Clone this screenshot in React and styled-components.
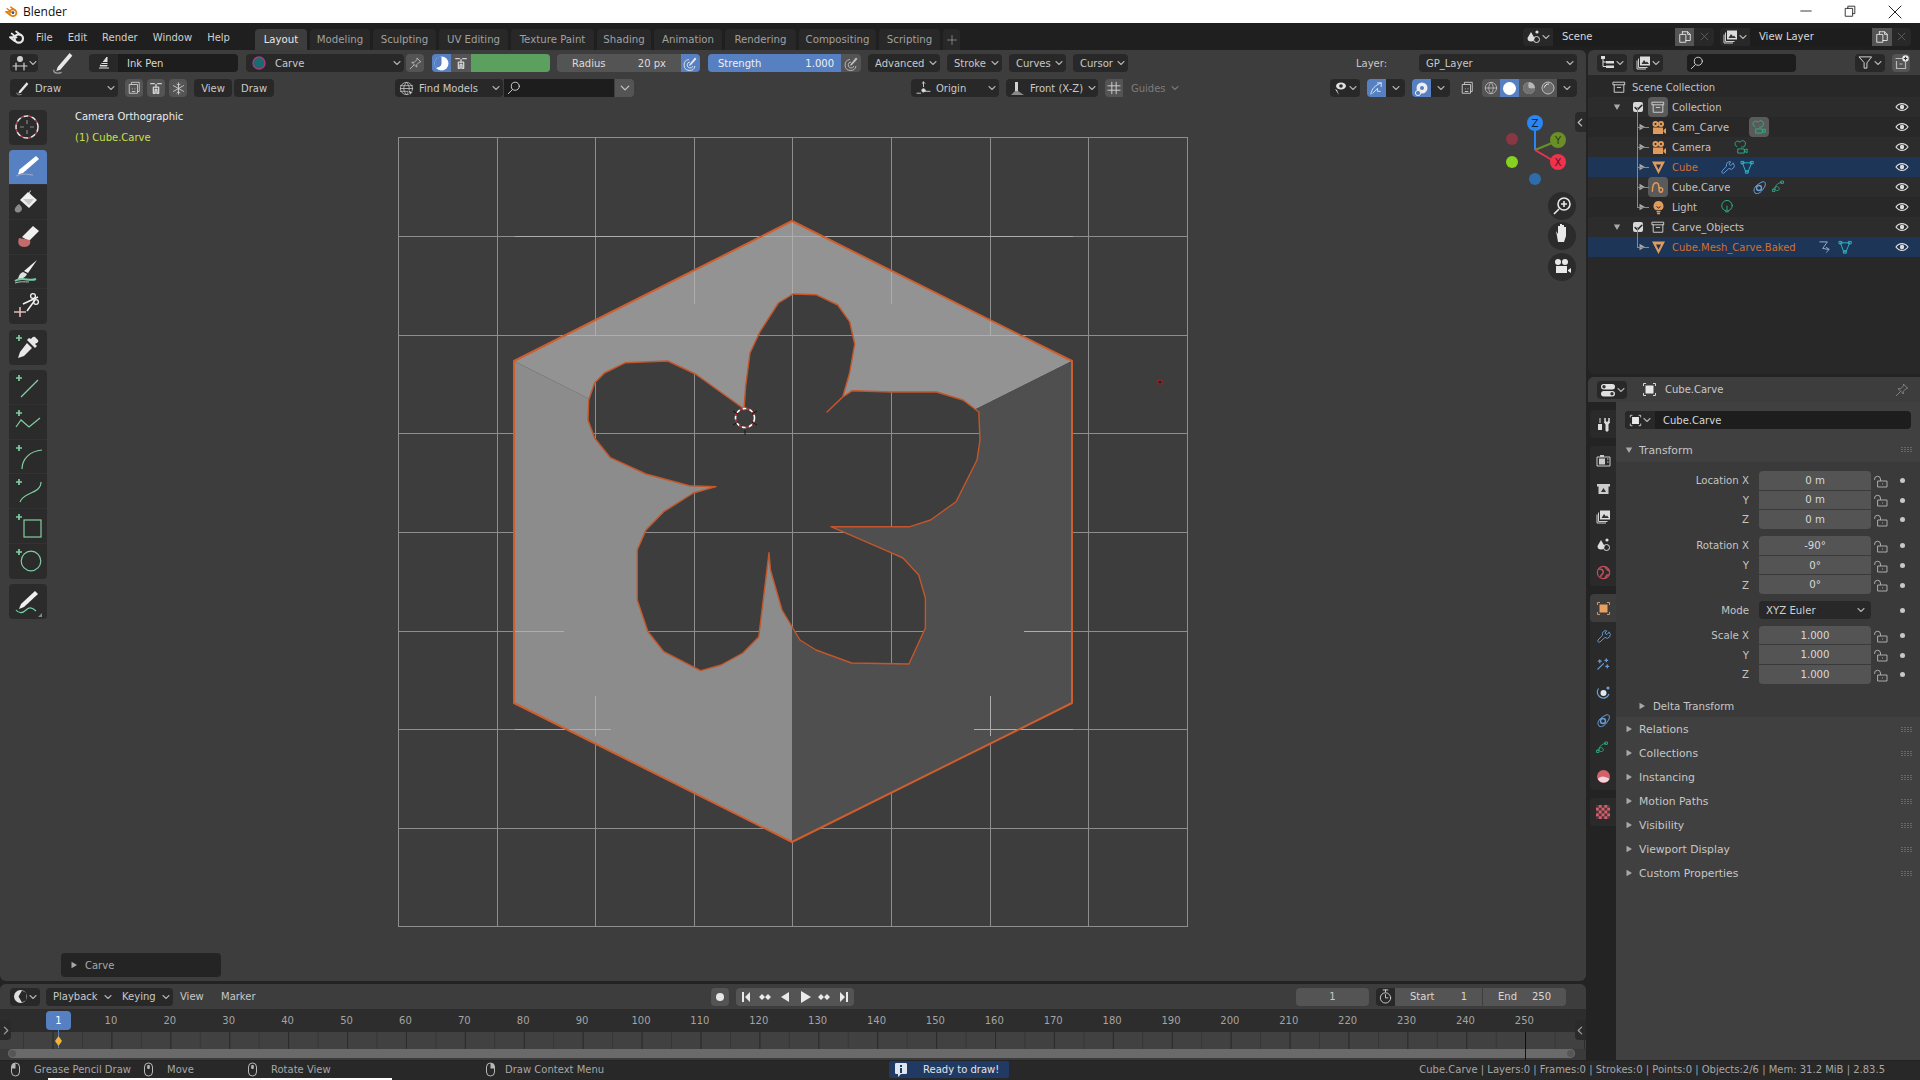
import React from 'react';
import styled, { createGlobalStyle } from 'styled-components';

const GlobalStyle = createGlobalStyle`
  html, body { margin: 0; padding: 0; background: #232323; }
  body { font-family: "DejaVu Sans", sans-serif; font-size: 10px; color: #c6c6c6; overflow: hidden; }
  * { box-sizing: border-box; }
  svg { display: block; flex: none; }
`;

const tones = {
  dark: '#282828',
  field: '#1d1d1d',
  gray: '#545454',
  blue: '#5680c2',
  green: '#5ca05f',
  none: 'transparent',
};

const joins = { l: '4px 0 0 4px', r: '0 4px 4px 0', m: '0', all: '4px' };

/* ---------- shell ---------- */

const Page = styled.div`
  width: 1920px;
  height: 1080px;
  display: flex;
  flex-direction: column;
  overflow: hidden;
  background: #232323;
`;

const TitleBar = styled.div`
  height: 23px;
  flex: none;
  background: #fff;
  color: #111;
  display: flex;
  align-items: center;
  padding-left: 5px;
  font-family: "Open Sans", sans-serif;
  font-size: 12px;
  gap: 5px;
`;

const WinButtons = styled.div`
  margin-left: auto;
  display: flex;
  padding-right: 17px;
  gap: 30px;
`;

const TopBar = styled.div`
  height: 27px;
  flex: none;
  background: #1f1f1f;
  display: flex;
  align-items: flex-end;
  padding-left: 9px;
`;

const MenuItems = styled.div`
  display: flex;
  align-items: center;
  height: 27px;
  width: 246px;
  gap: 15px;
  padding-top: 1px;
  color: #d0d0d0;
`;

const MenuLogo = styled.span`
  margin-right: -4px;
`;

const WorkspaceTab = styled.div`
  height: 21px;
  width: ${p => p.$w}px;
  margin-right: 3px;
  display: flex;
  align-items: center;
  justify-content: center;
  border-radius: 4px 4px 0 0;
  font-size: 10.2px;
  background: ${p => (p.$active ? '#3d3d3d' : '#282828')};
  color: ${p => (p.$active ? '#e6e6e6' : '#a0a0a0')};
`;

const TopRight = styled.div`
  margin-left: auto;
  height: 27px;
  display: flex;
  align-items: center;
  padding-right: 9px;
`;

const Body = styled.div`
  flex: 1;
  display: flex;
  gap: 2px;
  min-height: 0;
`;

const LeftColumn = styled.div`
  width: 1586px;
  display: flex;
  flex-direction: column;
  gap: 3px;
`;

const RightColumn = styled.div`
  flex: 1;
  display: flex;
  flex-direction: column;
  gap: 3px;
`;

/* ---------- widgets ---------- */

const Widget = styled.div`
  flex: none;
  height: 18px;
  width: ${p => p.$w}px;
  margin-left: ${p => p.$ml || 0}px;
  padding: 0 ${p => (p.$padR === undefined ? (p.$pad === undefined ? 5 : p.$pad) : p.$padR)}px 0 ${p => (p.$pad === undefined ? 5 : p.$pad)}px;
  display: flex;
  align-items: center;
  justify-content: ${p => (p.$center ? 'center' : 'flex-start')};
  gap: ${p => p.$gap || 0}px;
  background: ${p => tones[p.$tone || 'dark']};
  border-radius: ${p => joins[p.$join || 'all']};
  color: ${p => p.$color || '#c8c8c8'};
  white-space: nowrap;
  overflow: hidden;
`;

const PenSlot = styled.span`
  flex: none;
  width: 20px;
  height: 18px;
  margin-left: 15px;
  margin-right: -1px;
  display: flex;
  align-items: center;
  justify-content: center;
`;

const Grow = styled.span`
  flex: 1;
`;

const Plain = styled.span`
  flex: none;
  width: ${p => p.$w}px;
  margin-left: ${p => p.$ml || 0}px;
  color: #c8c8c8;
`;

const Seg = styled.div`
  flex: none;
  height: 100%;
  width: ${p => p.$w}px;
  display: flex;
  align-items: center;
  justify-content: center;
  background: ${p => tones[p.$tone || 'none']};
`;

/* ---------- viewport ---------- */

const Viewport = styled.div`
  position: relative;
  height: 931px;
  flex: none;
  background: #3d3d3d;
  border-radius: 0 6px 6px 6px;
  overflow: hidden;
`;

const Canvas = styled.svg`
  position: absolute;
  left: 0;
  top: 0;
`;

const HeaderRow = styled.div`
  position: relative;
  display: flex;
  align-items: center;
  height: 18px;
  padding-left: 10px;
  margin-top: ${p => p.$mt}px;
`;

const ViewBody = styled.div`
  position: relative;
  display: flex;
  padding: 13px 0 0 9px;
`;

const ToolColumn = styled.div`
  width: 38px;
  display: flex;
  flex-direction: column;
  gap: 5.5px;
`;

const ToolGroup = styled.div`
  background: #2b2b2b;
  border-radius: 4px;
  overflow: hidden;
`;

const Tool = styled.div`
  height: 34.8px;
  display: flex;
  align-items: center;
  justify-content: center;
  background: ${p => (p.$active ? '#5680c2' : 'transparent')};
  border-bottom: 1px solid #323232;
  &:last-child { border-bottom: 0; }
`;

const ViewInfo = styled.div`
  margin: -3px 0 0 28px;
  line-height: 20.5px;
  color: #ececec;
`;

const ActiveName = styled.div`
  color: #cbe04a;
`;

const OpPanel = styled.div`
  position: absolute;
  left: 61px;
  bottom: 4px;
  width: 160px;
  height: 24px;
  background: #242424;
  border-radius: 4px;
  display: flex;
  align-items: center;
  gap: 7px;
  padding-left: 9px;
  color: #a8a8a8;
`;

const EdgeArrow = styled.div`
  position: absolute;
  ${p => p.$side}: 0;
  top: ${p => p.$top}px;
  width: 11px;
  height: 20px;
  background: #2a2a2a;
  border-radius: ${p => (p.$side === 'right' ? '4px 0 0 4px' : '0 4px 4px 0')};
  display: flex;
  align-items: center;
  justify-content: center;
`;

const NavGizmo = styled.svg`
  position: absolute;
  right: 10px;
  top: 62px;
`;

/* ---------- timeline ---------- */

const Timeline = styled.div`
  position: relative;
  flex: 1;
  display: flex;
  flex-direction: column;
  border-radius: 6px 6px 0 0;
  overflow: hidden;
  background: #3a3a3a;
`;

const TimeHeader = styled.div`
  height: 25px;
  flex: none;
  display: flex;
  align-items: center;
  padding-left: 10px;
  background: #3d3d3d;
`;

const Scrub = styled.div`
  height: 23px;
  flex: none;
  background: #2d2d2d;
  display: flex;
  align-items: center;
  padding-left: 81.5px;
  color: #a4a4a4;
`;

const FrameNum = styled.span`
  flex: none;
  width: 58.9px;
  text-align: center;
`;

const FrameBadge = styled.div`
  position: absolute;
  left: 46px;
  top: 27px;
  width: 25px;
  height: 19px;
  border-radius: 4px;
  background: #5680c2;
  color: #fff;
  display: flex;
  align-items: center;
  justify-content: center;
`;

const Tracks = styled.div`
  height: 17px;
  flex: none;
  background-color: #414141;
  background-image:
    linear-gradient(90deg, #2b2b2b 1px, transparent 1px),
    linear-gradient(90deg, #363636 1px, transparent 1px);
  background-size: 58.92px 100%, 29.46px 100%;
  background-position: 52.5px 0, 52.5px 0;
`;

const Playhead = styled.svg`
  position: absolute;
  left: 50px;
  top: 46px;
`;

const EndLine = styled.div`
  position: absolute;
  left: 1525px;
  top: 48px;
  width: 1px;
  height: 28px;
  background: #111;
`;

const ScrollBar = styled.div`
  height: 9px;
  margin: 0 11px 0 8px;
  flex: none;
  position: relative;
  background: #6a6a6a;
  border-radius: 5px;
  display: flex;
  justify-content: space-between;
  align-items: center;
  padding: 0 1px;
`;

const ScrollEnd = styled.span`
  width: 7px;
  height: 7px;
  border-radius: 50%;
  background: #565656;
`;

/* ---------- outliner ---------- */

const Outliner = styled.div`
  height: 324px;
  flex: none;
  background: #282828;
  border-radius: 6px 0 0 6px;
  overflow: hidden;
`;

const PanelHeader = styled.div`
  height: 25px;
  flex: none;
  display: flex;
  align-items: center;
  background: #3d3d3d;
  padding-left: 9px;
`;

const OutRows = styled.div`
  padding-top: 2px;
`;

const OutRow = styled.div`
  height: 20px;
  position: relative;
  display: flex;
  align-items: center;
  padding-left: ${p => p.$indent}px;
  background: ${p => (p.$sel ? '#1d3557' : p.$alt ? '#2c2c2c' : 'transparent')};
`;

const Twist = styled.span`
  flex: none;
  width: 20px;
  display: flex;
`;

const Check = styled.span`
  flex: none;
  width: 10px;
  height: 10px;
  border-radius: 2px;
  background: #d8d8d8;
  margin-right: 5px;
  display: flex;
  align-items: center;
  justify-content: center;
`;

const Branch = styled.span`
  position: relative;
  flex: none;
  width: 11px;
  height: 20px;
  display: flex;
  align-items: center;
  padding-left: 1px;
  &::before {
    content: '';
    position: absolute;
    left: 0;
    top: -10px;
    height: ${p => (p.$last ? 20 : 30)}px;
    width: 1px;
    background: #8a8a8a;
  }
  &::after {
    content: '';
    position: absolute;
    left: 0;
    top: 10px;
    width: 12px;
    height: 1px;
    background: #8a8a8a;
  }
`;

const IconChip = styled.span`
  flex: none;
  width: 20px;
  height: 20px;
  margin-right: ${p => p.$mr || 0}px;
  border-radius: 4px;
  display: flex;
  align-items: center;
  justify-content: center;
  background: ${p => (p.$hi ? '#5a5a5a' : 'transparent')};
`;

const OutName = styled.span`
  flex: none;
  width: ${p => p.$w}px;
  color: ${p => p.$color || '#c2c2c2'};
`;

const OutExtras = styled.span`
  flex: none;
  display: flex;
  align-items: center;
`;

const EyeSlot = styled.span`
  position: absolute;
  right: 11px;
  top: 3px;
`;

/* ---------- properties ---------- */

const Properties = styled.div`
  flex: 1;
  display: flex;
  flex-direction: column;
  background: #3d3d3d;
  border-radius: 6px 0 0 0;
  overflow: hidden;
`;

const PropBody = styled.div`
  flex: 1;
  display: flex;
  min-height: 0;
`;

const TabColumn = styled.div`
  width: 28px;
  flex: none;
  background: #232323;
  padding: 8px 0 0 2px;
  display: flex;
  flex-direction: column;
  gap: 8px;
`;

const TabGroup = styled.div`
  background: #2a2a2a;
  border-radius: 4px 0 0 4px;
  overflow: hidden;
`;

const PropTab = styled.div`
  height: 28px;
  display: flex;
  align-items: center;
  justify-content: center;
  background: ${p => (p.$active ? '#3d3d3d' : 'transparent')};
  border-radius: 4px 0 0 4px;
`;

const PropMain = styled.div`
  flex: 1;
  background: #404040;
  padding-top: 9px;
`;

const NameRow = styled.div`
  margin: 0 9px;
  height: 18px;
  background: #1d1d1d;
  border-radius: 4px;
  display: flex;
  align-items: center;
  color: #d6d6d6;
`;

const NameIcon = styled.div`
  width: 30px;
  height: 18px;
  background: #282828;
  border-radius: 4px 0 0 4px;
  margin-right: 8px;
  display: flex;
  align-items: center;
  justify-content: center;
  gap: 1px;
`;

const PanelTitle = styled.div`
  height: ${p => p.$h || 24}px;
  margin-top: ${p => p.$mt || 0}px;
  display: flex;
  align-items: center;
  padding: 0 8px 0 9px;
  font-size: 10.8px;
  color: #c6c6c6;
  gap: 6px;
`;

const TransformBody = styled.div`
  background: #3a3a3a;
  height: 255px;
  padding-top: 9px;
`;

const PropGroup = styled.div`
  margin-bottom: 6.4px;
`;

const PropRow = styled.div`
  height: ${p => p.$h || 19.6}px;
  display: flex;
  align-items: center;
`;

const PropLabel = styled.span`
  width: 133px;
  text-align: right;
  flex: none;
  margin-right: 10px;
  font-size: 10.2px;
  color: #c4c4c4;
`;

const PropValue = styled.div`
  width: 112px;
  height: 100%;
  flex: none;
  background: #545454;
  border-bottom: 1px solid #3a3a3a;
  display: flex;
  align-items: center;
  justify-content: center;
  font-size: 10.2px;
  color: #d8d8d8;
  border-radius: ${p => (p.$first ? '4px 4px 0 0' : p.$last ? '0 0 4px 4px' : '0')};
`;

const ModeSelect = styled.div`
  width: 112px;
  height: 18px;
  flex: none;
  background: #282828;
  border-radius: 4px;
  padding: 0 6px 0 7px;
  display: flex;
  align-items: center;
  font-size: 10.2px;
  color: #d0d0d0;
`;

const LockSlot = styled.span`
  flex: none;
  width: 25px;
  margin-left: 2px;
  display: flex;
`;

const DotSlot = styled.span`
  flex: none;
  width: 5px;
  height: 5px;
  margin-left: 2px;
  border-radius: 50%;
  background: #c8c8c8;
`;

const DeltaRow = styled.div`
  display: flex;
  align-items: center;
  gap: 7px;
  padding-left: 22px;
  margin-top: 16px;
  font-size: 10.2px;
  color: #c6c6c6;
`;

const PanelText = styled.span`
  flex: 1;
  padding-top: ${p => p.$dy || 0}px;
`;

/* ---------- status bar ---------- */

const Gutter = styled.div`
  height: 1px;
  flex: none;
`;

const StatusBar = styled.div`
  height: 17px;
  flex: none;
  display: flex;
  align-items: center;
  padding: 0 35px 0 10px;
  color: #a6a6a6;
  background: #282828;
`;

const StatusItem = styled.div`
  flex: none;
  width: ${p => p.$w}px;
  display: flex;
  align-items: center;
  gap: ${p => p.$gap}px;
`;

const ReadyBadge = styled.div`
  flex: none;
  width: 120px;
  height: 17px;
  background: #203a63;
  border-radius: 2px;
  color: #e4e4e4;
  display: flex;
  align-items: center;
  gap: 15px;
  padding-left: 5px;
`;

const StatusRight = styled.div`
  margin-left: auto;
`;

const TaskSliver = styled.div`
  height: 2px;
  flex: none;
  background: #282828;
  padding-left: 48px;
  &::before {
    content: '';
    display: block;
    width: 344px;
    height: 2px;
    background: #fff;
  }
`;

/* ---------- icons ---------- */

const Ico = ({ s = 14, vb = 16, c = '#d8d8d8', sw = 1.2, d, fill = 'none', children }) => (
  <svg width={s} height={s} viewBox={`0 0 ${vb} ${vb}`} fill={fill} stroke={c} strokeWidth={sw} strokeLinecap="round" strokeLinejoin="round">
    {d && <path d={d} />}
    {children}
  </svg>
);

const Chev = ({ c = '#b0b0b0', s = 8 }) => <Ico s={s} vb={8} c={c} sw={1.1} d="M1 2.5 4 5.5 7 2.5" />;
const Tri = ({ c = '#a8a8a8', open }) => (
  <svg width="8" height="8" viewBox="0 0 8 8">
    <path d={open ? 'M0.8 1.5h6.4L4 7z' : 'M1.5 0.8v6.4L7 4z'} fill={c} />
  </svg>
);

const Logo = ({ c, dot, s = 16 }) => (
  <svg width={s} height={s} viewBox="0 0 16 16" fill="none">
    <circle cx="9.8" cy="9.5" r="4.2" stroke={c} strokeWidth="2.2" />
    <path d="M1 8.2h6L2.8 4.6M7.2 2.6 12 6.2M1.2 8.4 5.6 12" stroke={c} strokeWidth="1.9" strokeLinecap="round" />
    <circle cx="9.8" cy="9.5" r="1.7" fill={dot} />
  </svg>
);

const PenBig = ({ s = 18 }) => (
  <svg width={s} height={s} viewBox="0 0 18 18" fill="none">
    <path d="M14 1.5 16 3.5 7 14 4 15 5 12z" fill="#e8e8e8" />
    <path d="M2 14c0 3 3 3 6 2" stroke="#9a9a9a" strokeWidth="1" />
  </svg>
);

const ModeIcon = () => (
  <Ico s={16} c="#d0d0d0" d="M1 11h14M4 8v7M12 8v7">
    <circle cx="8" cy="4" r="2.4" fill="#d0d0d0" />
  </Ico>
);

const InkIcon = () => (
  <svg width="14" height="14" viewBox="0 0 14 14" fill="none">
    <path d="M2 12h10M10 1 3 10h7z" fill="#e0e0e0" stroke="#e0e0e0" />
    <path d="M5 6.5h6M4 8.5h7" stroke="#282828" />
  </svg>
);

const MatBall = () => (
  <svg width="14" height="14" viewBox="0 0 14 14">
    <circle cx="7" cy="7" r="6" fill="#1b6a6c" stroke="#a83a80" strokeWidth="1.4" />
  </svg>
);

const PinIcon = ({ c = '#c8c8c8', s = 13 }) => <Ico s={s} c={c} sw={1} d="M10 1.5 14.5 6 12.5 6.5 9.5 9.5 9.5 12.5 3.5 6.5 6.5 6.5 9.5 3.5ZM6 10 1.5 14.5" />;

const HalfBall = ({ s = 15 }) => (
  <svg width={s} height={s} viewBox="0 0 14 14">
    <circle cx="7" cy="7" r="6.5" fill="#fff" />
    <path d="M7 .5a6.5 6.5 0 0 0-5 10.6C5 10.5 7 9.5 7 7z" fill="#5680c2" />
  </svg>
);

const NodesIcon = () => (
  <Ico s={14} c="#d0d0d0" sw={1.6} d="M2 3h4M10 3h4M8 4v4M5 7h6v7H9v-4H7v4H5z" />
);

const BrushPen = ({ c = '#e8e8e8' }) => (
  <svg width="15" height="15" viewBox="0 0 15 15" fill="none">
    <path d="M12 1.5 13.5 3 8 9 6 10l.7-2z" fill={c} />
    <path d="M6 3.5a5.5 5.5 0 1 0 6 6.5M7 6a3 3 0 1 0 3 4" stroke={c} strokeWidth="0.9" />
  </svg>
);

const SearchIcon = ({ s = 14 }) => (
  <Ico s={s} c="#d0d0d0" sw={1.1} d="M6 10 1.5 14.5">
    <circle cx="9.5" cy="6" r="4.6" />
  </Ico>
);

const GlobeArrow = () => (
  <Ico s={15} c="#c0c0c0" sw={0.9} d="M1.5 8h13M8 1.5c-4 4-4 9 0 13M8 1.5c4 4 4 9 0 13M1.5 5h13M1.5 11h9">
    <circle cx="8" cy="8" r="6.5" />
    <path d="M10 10 15 12l-2 1-1 2z" fill="#e6e6e6" stroke="#3d3d3d" />
  </Ico>
);

const OriginIcon = () => (
  <Ico s={15} c="#cfcfcf" sw={1} d="M8 1v5M6.5 2.5 8 1l1.5 1.5M10 11h5M1 13h4">
    <circle cx="8" cy="10" r="1.8" fill="#e0e0e0" />
  </Ico>
);

const CubeView = () => (
  <svg width="15" height="15" viewBox="0 0 15 15" fill="none">
    <path d="M5 1h3v9H5z" fill="#d0d0d0" />
    <path d="M1 14 5 10h3l6 4z" fill="#8a8a8a" />
  </svg>
);

const GridIcon = ({ c = '#d0d0d0' }) => <Ico s={14} c={c} sw={1.1} d="M1 5.5h14M1 10.5h14M5.5 1.5v13M10.5 1.5v13" />;

const EyeOverlay = () => (
  <svg width="15" height="15" viewBox="0 0 15 15" fill="none">
    <ellipse cx="8" cy="5" rx="5" ry="3.5" fill="#e0e0e0" />
    <circle cx="8" cy="5" r="1.8" fill="#282828" />
    <path d="M2 8 6 14 4 9z" fill="#e0e0e0" />
  </svg>
);

const SnapIcon = () => <Ico s={15} c="#e8e8e8" sw={1} d="M2 14C3 8 6 5 13 2M9 2h4v4M4 13 9 8M9 8v3h3" />;

const PropEdit = () => (
  <svg width="15" height="15" viewBox="0 0 15 15" fill="none">
    <circle cx="8" cy="7" r="5.5" fill="#eee" />
    <circle cx="8" cy="7" r="2" fill="#5680c2" />
    <circle cx="4" cy="12" r="2.6" stroke="#eee" fill="#5680c2" />
  </svg>
);

const XrayIcon = () => (
  <Ico s={14} c="#d0d0d0" sw={1} d="M3 4h9v10H3zM5 4V1.5h9V12h-2M6 9h.1M9 9h.1M6 12h3" />
);

const ShadeWire = () => (
  <Ico s={14} c="#c0c0c0" sw={0.9} d="M1.5 8h13M8 1.5c-3.5 4-3.5 9 0 13M8 1.5c3.5 4 3.5 9 0 13">
    <circle cx="8" cy="8" r="6.5" />
  </Ico>
);

const ShadeSolid = () => <svg width="15" height="15" viewBox="0 0 15 15"><circle cx="7.5" cy="7.5" r="6.5" fill="#fff" /></svg>;
const ShadeMat = () => (
  <svg width="14" height="14" viewBox="0 0 14 14">
    <circle cx="7" cy="7" r="6" fill="#b8b8b8" />
    <path d="M7 13a6 6 0 0 1 0-12c-1 3-1 4 0 6 2 .5 4 .5 6 0a6 6 0 0 1-6 6z" fill="#727272" />
  </svg>
);
const ShadeRender = () => (
  <svg width="14" height="14" viewBox="0 0 14 14" fill="none">
    <circle cx="7" cy="7" r="6" fill="#6a6a6a" stroke="#c0c0c0" />
    <path d="M3.5 6.5A4 4 0 0 1 8 3" stroke="#e8e8e8" />
  </svg>
);

const CopyIcon = () => <Ico s={14} c="#e0e0e0" sw={1.1} d="M5 2h6l3 3v7H9M5 2v3H2v9h7V5H5M11 2v3h3" />;
const CloseIcon = ({ c = '#6a6a6a' }) => <Ico s={11} c={c} sw={1.1} d="M3 3l10 10M13 3 3 13" />;

const SceneIcon = () => (
  <svg width="15" height="15" viewBox="0 0 15 15" fill="none">
    <path d="M5 3 8.5 9a3.5 3.5 0 1 1-7 0z" fill="#dcdcdc" />
    <circle cx="11" cy="3" r="1.6" fill="#dcdcdc" />
    <circle cx="10.5" cy="10.5" r="3" stroke="#dcdcdc" />
  </svg>
);

const LayerIcon = () => (
  <svg width="15" height="15" viewBox="0 0 15 15" fill="none">
    <path d="M4 1.5h10v9H4z" fill="#dcdcdc" />
    <path d="M5.5 9 8 5l2 2.5 1-1L13 9z" fill="#333" />
    <path d="M2.5 3.5v9h9M1 5.5V14h9" stroke="#cfcfcf" />
  </svg>
);

const OutlinerType = () => (
  <svg width="15" height="15" viewBox="0 0 15 15" fill="none">
    <path d="M1 1h4v3H1zM6 6h8v2.4H6zM6 10.5h8V13H6z" fill="#dcdcdc" />
    <path d="M3 4v7.5h3M3 7h3" stroke="#dcdcdc" />
  </svg>
);

const FilterIcon = () => <Ico s={15} c="#dcdcdc" sw={1} d="M1.5 2h13L9.5 8.5V14H6.5V8.5z" />;

const NewColl = () => (
  <svg width="15" height="15" viewBox="0 0 15 15" fill="none">
    <path d="M1.5 3.5h8M2.5 6v7.5h9V7M5.5 9h3" stroke="#b8b8b8" strokeWidth="1.2" />
    <circle cx="11.5" cy="3.5" r="3.2" fill="#e8e8e8" />
    <path d="M11.5 1.8v3.4M9.8 3.5h3.4" stroke="#333" />
  </svg>
);

const Collection = () => <Ico s={14} c="#d0d0d0" sw={1.1} d="M1.5 2.5h13v3h-13zM2.5 5.5V14h11V5.5M6 8.5h4" />;

const CamObj = () => (
  <svg width="15" height="15" viewBox="0 0 15 15">
    <circle cx="4.5" cy="4" r="3" fill="#e09a5c" />
    <circle cx="10" cy="4" r="3" fill="#e09a5c" />
    <circle cx="4.5" cy="4" r="1" fill="#282828" />
    <circle cx="10" cy="4" r="1" fill="#282828" />
    <path d="M2 7.5h10v6.5H2zM12.5 10 15 8v6l-2.5-2z" fill="#e09a5c" />
  </svg>
);

const CamData = () => (
  <Ico s={15} c="#2fae8a" sw={1} d="M4 13.5V9.5h7v4zM11 11l3-1.5v4L11 12M3 7a3 3 0 1 1 3.5-4.5A3 3 0 0 1 12 5c0 2-2 3-4 2.5" />
);

const MeshObj = () => (
  <svg width="15" height="15" viewBox="0 0 15 15">
    <path d="M1 1.5h13L7.5 14zM5 4.5l2.5 5 2.5-5z" fill="#e09a5c" fillRule="evenodd" />
  </svg>
);

const MeshData = () => (
  <Ico s={15} c="#2fb8c8" sw={1} d="M3 3h9.5L8.5 12.5H6.5zM1.5 1.5h2.6v2.6H1.5zM11.5 1.5h2.6v2.6h-2.6zM6.2 11.5h2.6v2.6H6.2z" />
);

const Wrench = ({ c = '#6a9ed8' }) => <Ico s={15} c={c} sw={1} d="M14 3.5 11.5 6 9.5 4.5 11.5 2A3.5 3.5 0 0 0 7 6.5L2 12a1.5 1.5 0 0 0 2 2l5.5-5A3.5 3.5 0 0 0 14 3.5z" />;

const GpObj = () => <Ico s={15} c="#e09a5c" sw={1.6} d="M1.5 12c0-6 2-9 4-9s3 3 3 6c0 3 1 4 2 4s2-1 2-2.5c0-2-2-3-4-1.5" />;
const ModBlue = () => (
  <svg width="15" height="15" viewBox="0 0 15 15" fill="none">
    <path d="M3 13C0 9 4 5 10 2c3-1 4 1 3 4-3 6-7 9-10 7z" stroke="#6a9ed8" />
    <circle cx="7" cy="8" r="2.5" stroke="#6a9ed8" strokeWidth="1.4" />
  </svg>
);
const GpData = () => <Ico s={14} c="#2fae8a" sw={1} d="M2 11c0-3 3-4 5-3s2 4-1 4-3-3-1-6 5-3 6-3M1 10.5h2.4v2.6H1zM10.5 1.2h2.6v2.6h-2.6z" />;
const LightObj = () => (
  <svg width="15" height="15" viewBox="0 0 15 15" fill="none">
    <path d="M7.5 1a5 5 0 0 1 3 9H4.5a5 5 0 0 1 3-9z" fill="#e09a5c" />
    <path d="M5.5 11.5h4M6 13.5h3" stroke="#e09a5c" strokeWidth="1.3" />
    <path d="M5.5 6.5 7.5 8l2-1.5" stroke="#282828" />
  </svg>
);
const LightData = () => (
  <Ico s={14} c="#2fae8a" sw={1.1} d="M6.5 13.5h3M8 11V7">
    <circle cx="8" cy="6.5" r="6" />
  </Ico>
);
const BakeLink = () => <Ico s={15} c="#9ab4d4" sw={1} d="M2 2h8l-5 7 6 1M9 8l3 2-3 3" />;

const EyeIcon = () => (
  <svg width="14" height="14" viewBox="0 0 14 14" fill="none">
    <path d="M1 7c3-4.5 9-4.5 12 0-3 4.5-9 4.5-12 0z" stroke="#dcdcdc" strokeWidth="1.2" />
    <circle cx="7" cy="7" r="2.2" fill="#dcdcdc" />
  </svg>
);

const ObjIcon = ({ c = '#e8e8e8', s = 15 }) => (
  <svg width={s} height={s} viewBox="0 0 15 15" fill="none">
    <path d="M4 1.5H1.5V4M11 1.5h2.5V4M4 13.5H1.5V11M11 13.5h2.5V11" stroke={c} strokeWidth="0.9" />
    <path d="M3.5 3.5h8v8h-8z" fill={c} />
  </svg>
);

const PropsType = () => (
  <svg width="16" height="16" viewBox="0 0 16 16">
    <rect x="1" y="2" width="14" height="5.5" rx="2.7" fill="#e0e0e0" />
    <rect x="1" y="9" width="14" height="5.5" rx="2.7" fill="#e0e0e0" />
    <circle cx="4" cy="4.7" r="1.7" fill="#333" />
    <circle cx="12" cy="11.7" r="1.7" fill="#333" />
  </svg>
);

const ToolTab = () => (
  <svg width="15" height="15" viewBox="0 0 15 15" fill="none">
    <path d="M4 1v5" stroke="#ddd" />
    <path d="M2 7h4v6H2z" fill="#ddd" />
    <path d="M9 1v3l2 1.5L13 4V1v3a2 2 0 0 1-1 3v7h-2V7a2 2 0 0 1-1-3z" fill="#ddd" stroke="#ddd" />
  </svg>
);
const RenderTab = () => (
  <svg width="15" height="15" viewBox="0 0 15 15" fill="none">
    <path d="M1 4h13v9H1z" stroke="#ccc" />
    <path d="M4 2h4v2H4zM3 5.5h6v6H3z" fill="#ccc" />
    <path d="M11 6h1.5M11 9h1.5" stroke="#ccc" />
  </svg>
);
const OutputTab = () => (
  <svg width="15" height="15" viewBox="0 0 15 15">
    <path d="M1 3h13v2.5h-1.5V13H2.5V5.5H1z" fill="#ccc" />
    <path d="M5 11 7.5 7 10 11z" fill="#333" />
  </svg>
);
const WorldTab = () => (
  <svg width="15" height="15" viewBox="0 0 15 15" fill="none">
    <circle cx="7.5" cy="7.5" r="6.2" stroke="#c0505e" strokeWidth="1.2" />
    <path d="M3 4c3 0 5 1 4 4S4 9 5 12M9 2c1 2 3 3 4 4M9 13l2-3 2 0" stroke="#c0505e" strokeWidth="1.6" />
  </svg>
);
const ParticlesTab = () => <Ico s={15} c="#6a9ed8" sw={1.3} d="M2 13 8 7M11 2v3M9.5 3.5h3M4 3v3M2.5 4.5h3M12 8.5v3M10.5 10h3" />;
const PhysicsTab = () => (
  <svg width="15" height="15" viewBox="0 0 15 15" fill="none">
    <path d="M2.5 3.5A6 6 0 1 0 13 9" stroke="#6a9ed8" strokeWidth="1.2" />
    <circle cx="7.5" cy="8" r="3" fill="#e0e8f0" />
    <circle cx="12" cy="3" r="1.6" fill="#6a9ed8" />
  </svg>
);
const MaterialTab = () => (
  <svg width="15" height="15" viewBox="0 0 15 15">
    <circle cx="7.5" cy="7.5" r="6.5" fill="#d4606c" />
    <path d="M7.5 7.5c-2.5 0-5 1-5.6 2.5A6.5 6.5 0 0 0 13.5 10C12 8.500 9.500 8 7.500 7.500z" fill="#ead8da" />
  </svg>
);
const TextureTab = () => (
  <svg width="14" height="14" viewBox="0 0 14 14">
    <rect width="14" height="14" fill="#d4606c" />
    <path d="M0 0h2.8v2.8H0zM5.6 0h2.8v2.8H5.6zM11.2 0H14v2.8h-2.8zM2.8 2.8h2.8v2.8H2.8zM8.4 2.8h2.8v2.8H8.4zM0 5.6h2.8v2.8H0zM5.6 5.6h2.8v2.8H5.6zM11.2 5.6H14v2.8h-2.8zM2.8 8.4h2.8v2.8H2.8zM8.4 8.4h2.8v2.8H8.4zM0 11.2h2.8V14H0zM5.6 11.2h2.8V14H5.6zM11.2 11.2H14V14h-2.8z" fill="#50343a" />
  </svg>
);

const LockIcon = () => <Ico s={16} c="#b8b8b8" sw={0.9} d="M1.5 6.5a3 3 0 0 1 6-.5v1.5M5 8h9v6H5zM9.5 11h.1" />;

const DragDots = () => (
  <svg width="11" height="7" viewBox="0 0 11 7">
    {[0, 1, 2, 3].map(x => [1, 3, 5].map(y => <rect key={`${x}${y}`} x={x * 3 + 0.5} y={y} width="1" height="1" fill="#8a8a8a" />))}
  </svg>
);

const MouseIcon = ({ side }) => (
  <svg width="11" height="15" viewBox="0 0 11 15" fill="none">
    <rect x="1.5" y="1" width="8" height="13" rx="4" stroke="#b8b8b8" />
    {side === 'left' && <path d="M5.5 1v5.5H1.5V5a4 4 0 0 1 4-4z" fill="#b8b8b8" />}
    {side === 'mid' && <rect x="4.2" y="3" width="2.6" height="4" rx="1" fill="#b8b8b8" />}
    {side === 'right' && <path d="M5.5 1v5.5h4V5a4 4 0 0 0-4-4z" fill="#b8b8b8" />}
  </svg>
);

const ClockIcon = () => (
  <Ico s={15} c="#d0d0d0" sw={1} d="M5.5 1h5M8 1v2M8 6v3.5h2.5">
    <circle cx="8" cy="9.5" r="5.5" />
  </Ico>
);

const TimelineIcon = () => (
  <svg width="15" height="15" viewBox="0 0 15 15">
    <circle cx="7.5" cy="7.5" r="6.5" fill="#e0e0e0" />
    <path d="M9 1.5 5.500 7.500 9 13.500 13.500 11 13.500 4z" fill="#282828" />
  </svg>
);

const Transport = ({ d }) => (
  <svg width="12" height="12" viewBox="0 0 12 12"><path d={d} fill="#eaeaea" /></svg>
);

/* tools column, green is the add colour, white the tool */
const add = '#80cfa2';
const Plus = () => <path d="M8 4v6M5 7h6" stroke={add} strokeWidth="1.7" fill="none" />;

const tools = {
  cursor: (
    <>
      <circle cx="16" cy="16" r="11" stroke="#e6e6e6" strokeWidth="1.5" strokeDasharray="5 3" />
      <circle cx="16" cy="16" r="11" stroke="#b04252" strokeWidth="1.5" strokeDasharray="3 5" strokeDashoffset="-5" />
      <path d="M16 9v4M16 19v4M9 16h4M19 16h4" stroke="#888" strokeWidth="1.2" />
    </>
  ),
  draw: (
    <>
      <path d="M25 5l3 3-16 14-5 1.5 1.5-5z" fill="#fff" />
      <path d="M5 25c5-3 11-2 17-1" stroke="#8aa0c8" strokeWidth="1.3" />
    </>
  ),
  fill: (
    <>
      <path d="M17 6l9 8-8 8-9-8z" fill="#f0f0f0" />
      <path d="M12 13h11l-5 6z" fill="#c8c8c8" />
      <path d="M20 5c-2 0-2 3 0 5" stroke="#e8e8e8" />
      <path d="M8 18c3 3 4 5 2 7a3.6 3.6 0 0 1-6 0c-1-2 1-5 4-7z" fill="#8a8a8a" />
    </>
  ),
  erase: (
    <>
      <path d="M22 5l6 5-10 10-7-4z" fill="#f0f0f0" />
      <path d="M8 17c-2 5 0 9 5 9s7-3 6-7z" fill="#c46a6a" />
    </>
  ),
  tint: (
    <>
      <path d="M26 4 17 17l-4-2z" fill="#f0f0f0" />
      <path d="M12 16c-3 1-4 3-5 7 4 0 8-2 9-5z" fill="#e0e0e0" />
      <path d="M4 25c7-5 14 1 21-2" stroke="#70cfa2" strokeWidth="2" />
      <path d="M4 27c6-2 9-1 14-1" stroke="#b8b8b8" />
    </>
  ),
  cutter: (
    <>
      <path d="M9 26V16M3 21h12" stroke="#e4b8b8" strokeWidth="1.6" />
      <path d="M12 13 27 6M16 20 24 9" stroke="#f0f0f0" strokeWidth="1.5" />
      <circle cx="25" cy="11" r="2.4" stroke="#f0f0f0" strokeWidth="1.3" />
      <circle cx="22" cy="5" r="2.4" stroke="#f0f0f0" strokeWidth="1.3" />
    </>
  ),
  dropper: (
    <>
      <Plus />
      <path d="M27 9 24 6c-2-1-3 1-4 2l-2-1-2 2 8 8 2-2-2-2c2-1 4-2 3-4zM16 12 9 21l-2 6 6-2 8-8" fill="#e8e8e8" />
    </>
  ),
  line: (<><Plus /><path d="M10 26 27 9" stroke={add} strokeWidth="1.2" /></>),
  poly: (<><Plus /><path d="M5 21 10 14 18 21 29 12" stroke={add} strokeWidth="1.2" /></>),
  arc: (<><Plus /><path d="M11 28c0-10 8-18 20-19" stroke={add} strokeWidth="1.2" /></>),
  curve: (<><Plus /><path d="M9 27c3-10 21-8 21-20" stroke={add} strokeWidth="1.2" /></>),
  box: (<><Plus /><rect x="13" y="10" width="17" height="17" stroke={add} strokeWidth="1.2" /></>),
  circle: (<><Plus /><circle cx="20" cy="16" r="9.8" stroke={add} strokeWidth="1.2" /></>),
  annotate: (
    <>
      <path d="M24 5l3 3-14 13-5 2 2-5z" fill="#f0f0f0" />
      <path d="M5 24c3 4 7 3 10 0s6-3 10 1" stroke="#70cfa2" strokeWidth="1.2" />
      <path d="M31 27v4h-4z" fill="#888" />
    </>
  ),
};

const ToolIcon = ({ name }) => (
  <svg width="34" height="32" viewBox="0 0 34 32" fill="none">{tools[name]}</svg>
);

/* ---------- data ---------- */

const workspaces = [
  ['Layout', 52, true], ['Modeling', 60], ['Sculpting', 63], ['UV Editing', 69], ['Texture Paint', 83],
  ['Shading', 54], ['Animation', 68], ['Rendering', 71], ['Compositing', 77], ['Scripting', 61],
];

const frames = [10, 20, 30, 40, 50, 60, 70, 80, 90, 100, 110, 120, 130, 140, 150, 160, 170, 180, 190, 200, 210, 220, 230, 240, 250];

const flower = 'M744 410 745.6 386.7 750 353 760 331.7 778.4 303 793 294 816 294.7 837.7 305 849.6 321.7 854.7 344 849.6 373 842.8 396.7 827 412 842.8 397 852.3 390.7 891 392 936.5 392 963 400 978.8 412 980 440 977 460 956 501.7 930.6 520 910 526.7 831 526.7 891 552.7 903 558 918.7 575 925.4 598 925.4 628 908.9 664 851.5 663 816 650 800 640 782 610 770.5 570 769 552.7 758.7 637 742.8 653 721 665 700.6 670.7 663.8 651.7 648 631.7 637.3 600 637.3 550 646 530 663.8 511.7 693.4 493 716 486.7 689.5 485.7 646 474 610.4 457.7 594.6 438 588 420 588.7 400 594.6 383 604.5 373 625.5 362.7 667.7 361 695.4 374 742.8 408Z';

const gridX = [398, 497, 595, 694, 792, 891, 990, 1088, 1187];
const gridY = [137, 236, 335, 433, 532, 631, 729, 828, 926];

const GridLines = () => (
  <g stroke="#8e8e8e" strokeWidth="1" shapeRendering="crispEdges">
    {gridX.map(x => <line key={x} x1={x + 0.5} x2={x + 0.5} y1="137" y2="927" />)}
    {gridY.map(y => <line key={y} y1={y + 0.5} y2={y + 0.5} x1="398" x2="1188" />)}
  </g>
);

const faceLines = [
  [595, 320, 595, 335], [990, 320, 990, 335], [694, 270, 694, 303], [891, 270, 891, 303], [792, 221, 792, 295],
  [514, 236, 1072, 236], [560, 335, 1025, 335],
  [514, 631, 563, 631], [1023, 631, 1072, 631], [514, 729, 610, 729], [973, 729, 1072, 729],
  [595, 695, 595, 735], [990, 695, 990, 735],
];

const props = [
  [['Location X', '0 m'], ['Y', '0 m'], ['Z', '0 m']],
  [['Rotation X', '-90°'], ['Y', '0°'], ['Z', '0°']],
];

const closedPanels = ['Relations', 'Collections', 'Instancing', 'Motion Paths', 'Visibility', 'Viewport Display', 'Custom Properties'];

const ValueGroup = ({ rows }) => (
  <PropGroup>
    {rows.map(([label, value], i) => (
      <PropRow key={label}>
        <PropLabel>{label}</PropLabel>
        <PropValue $first={i === 0} $last={i === rows.length - 1}>{value}</PropValue>
        <LockSlot><LockIcon /></LockSlot>
        <DotSlot />
      </PropRow>
    ))}
  </PropGroup>
);

export default function App() {
  return (
    <Page>
      <GlobalStyle />
      <TitleBar>
        <Logo c="#e87d0d" dot="#265787" s={13} />
        Blender
        <WinButtons>
          <Ico s={14} c="#222" sw={1} d="M2 8h12" />
          <Ico s={14} c="#222" sw={1} d="M3 5h8v9H3zM5.5 5V2.5h8V11H11" />
          <Ico s={16} c="#222" sw={1} d="M2 2l12 12M14 2 2 14" />
        </WinButtons>
      </TitleBar>

      <TopBar>
        <MenuItems>
          <MenuLogo><Logo c="#e8e8e8" dot="#1f1f1f" /></MenuLogo>
          <span>File</span><span>Edit</span><span>Render</span><span>Window</span><span>Help</span>
        </MenuItems>
        {workspaces.map(([name, w, active]) => <WorkspaceTab key={name} $w={w} $active={active}>{name}</WorkspaceTab>)}
        <WorkspaceTab $w={17}><Ico s={12} c="#999" sw={1} d="M8 2v12M2 8h12" /></WorkspaceTab>
        <TopRight>
          <Widget $w={30} $join="l" $pad={0} $center $gap={1}><SceneIcon /><Chev /></Widget>
          <Widget $w={122} $tone="field" $join="m" $pad={9} $color="#d8d8d8">Scene</Widget>
          <Widget $w={19} $tone="gray" $join="m" $pad={0} $center><CopyIcon /></Widget>
          <Widget $w={20} $join="r" $pad={0} $center><CloseIcon /></Widget>
          <Widget $ml={6} $w={30} $join="l" $pad={0} $center $gap={1}><LayerIcon /><Chev /></Widget>
          <Widget $w={122} $tone="field" $join="m" $pad={9} $color="#d8d8d8">View Layer</Widget>
          <Widget $w={20} $tone="gray" $join="m" $pad={0} $center><CopyIcon /></Widget>
          <Widget $w={19} $join="r" $pad={0} $center><CloseIcon /></Widget>
        </TopRight>
      </TopBar>

      <Body>
        <LeftColumn>
          <Viewport>
            <Canvas width="1586" height="931" viewBox="0 50 1586 931" fill="none">
              <defs>
                <clipPath id="flowerClip"><path d={flower} /></clipPath>
              </defs>
              <GridLines />
              <path d="M792 221 1072 361 792 501 514 361Z" fill="#939393" />
              <path d="M514 361 792 501V842L514 703Z" fill="#8c8c8c" />
              <path d="M1072 361V703L792 842V501Z" fill="#4f4f4f" />
              <g stroke="#adadad" strokeWidth="1" shapeRendering="crispEdges">
                {faceLines.map(([x1, y1, x2, y2]) => <line key={`${x1}${y1}${x2}`} x1={x1 + 0.5} y1={y1 + 0.5} x2={x2 + 0.5} y2={y2 + 0.5} />)}
              </g>
              <path d={flower} fill="#3d3d3d" />
              <g clipPath="url(#flowerClip)"><GridLines /></g>
              <path d={flower} stroke="#c4562a" strokeWidth="1.4" strokeLinejoin="round" />
              <path d="M792 221 1072 361V703L792 842 514 703V361Z" stroke="#cf5e2e" strokeWidth="2" strokeLinejoin="round" />
              <circle cx="745" cy="418" r="9.5" stroke="#fff" strokeWidth="1.6" strokeDasharray="4 3" />
              <circle cx="745" cy="418" r="9.5" stroke="#c0303a" strokeWidth="1.6" strokeDasharray="3 4" strokeDashoffset="-4" />
              <path d="M733 411l5 3M757 411l-5 3M733 425l5-3M757 425l-5-3M745 430v5" stroke="#111" strokeWidth="0.9" />
              <circle cx="1160" cy="382" r="2.2" fill="#222" stroke="#a02222" strokeWidth="1.2" />
            </Canvas>

            <HeaderRow $mt={4}>
              <Widget $w={28} $pad={0} $center $gap={1}><ModeIcon /><Chev /></Widget>
              <PenSlot><PenBig s={24} /></PenSlot>
              <Widget $ml={17} $w={29} $join="l" $pad={0} $center><InkIcon /></Widget>
              <Widget $w={120} $tone="field" $join="r" $pad={9} $color="#d8d8d8">Ink Pen</Widget>
              <Widget $ml={8} $w={158} $pad={6} $padR={3} $gap={9}><MatBall /><Grow>Carve</Grow><Chev /></Widget>
              <Widget $ml={2} $w={18} $tone="gray" $pad={0} $center><PinIcon /></Widget>
              <Widget $ml={8} $w={118} $pad={0} $tone="gray">
                <Seg $w={19} $tone="blue"><HalfBall /></Seg>
                <Seg $w={20}><NodesIcon /></Seg>
                <Seg $w={79} $tone="green" />
              </Widget>
              <Widget $ml={7} $w={124} $tone="gray" $join="l" $pad={15} $color="#dcdcdc">
                <Grow>Radius</Grow>20 px
              </Widget>
              <Widget $w={19} $tone="blue" $join="r" $pad={0} $center><BrushPen /></Widget>
              <Widget $ml={8} $w={133} $tone="blue" $join="l" $pad={10} $padR={7} $color="#f0f0f0">
                <Grow>Strength</Grow>1.000
              </Widget>
              <Widget $w={20} $tone="gray" $join="r" $pad={0} $center><BrushPen c="#c0c0c0" /></Widget>
              <Widget $ml={7} $w={72} $pad={7} $padR={3}><Grow>Advanced</Grow><Chev /></Widget>
              <Widget $ml={7} $w={55} $pad={7} $padR={3}><Grow>Stroke</Grow><Chev /></Widget>
              <Widget $ml={7} $w={57} $pad={7} $padR={3}><Grow>Curves</Grow><Chev /></Widget>
              <Widget $ml={7} $w={55} $pad={7} $padR={3}><Grow>Cursor</Grow><Chev /></Widget>
              <Plain $ml={228} $w={63}>Layer:</Plain>
              <Widget $w={158} $pad={7} $padR={3}><Grow>GP_Layer</Grow><Chev /></Widget>
            </HeaderRow>

            <HeaderRow $mt={7}>
              <Widget $w={108} $pad={5} $padR={3} $gap={5}><PenBig s={15} /><Grow>Draw</Grow><Chev /></Widget>
              <Widget $ml={7} $w={18} $tone="gray" $pad={0} $center><XrayIcon /></Widget>
              <Widget $ml={4} $w={18} $tone="gray" $pad={0} $center><NodesIcon /></Widget>
              <Widget $ml={4} $w={18} $tone="gray" $pad={0} $center>
                <Ico s={13} c="#dcdcdc" sw={1} d="M8 1v14M1.8 4.5l12.4 7M1.8 11.5l12.4-7M6 2.5l2 2 2-2M6 13.5l2-2 2 2" />
              </Widget>
              <Widget $ml={7} $w={38} $pad={0} $center>View</Widget>
              <Widget $ml={2} $w={40} $pad={0} $center>Draw</Widget>
              <Widget $ml={121} $w={108} $pad={4} $padR={3} $gap={5}><GlobeArrow /><Grow>Find Models</Grow><Chev /></Widget>
              <Widget $ml={1} $w={110} $tone="field" $join="m" $pad={3}><SearchIcon /></Widget>
              <Widget $ml={1} $w={19} $tone="gray" $join="r" $pad={0} $center><Chev c="#c0c0c0" s={10} /></Widget>
              <Widget $ml={277} $w={88} $pad={5} $padR={3} $gap={5}><OriginIcon /><Grow>Origin</Grow><Chev /></Widget>
              <Widget $ml={7} $w={92} $pad={4} $padR={3} $gap={5}><CubeView /><Grow>Front (X-Z)</Grow><Chev /></Widget>
              <Widget $ml={7} $w={18} $tone="gray" $join="l" $pad={0} $center><GridIcon /></Widget>
              <Widget $w={59} $tone="none" $join="r" $pad={8} $padR={3} $color="#7c7c7c"><Grow>Guides</Grow><Chev c="#777" /></Widget>
              <Widget $ml={148} $w={30} $pad={0} $center $gap={1}><EyeOverlay /><Chev /></Widget>
              <Widget $ml={7} $w={19} $tone="blue" $join="l" $pad={0} $center><SnapIcon /></Widget>
              <Widget $w={19} $join="r" $pad={0} $center><Chev /></Widget>
              <Widget $ml={7} $w={19} $tone="blue" $join="l" $pad={0} $center><PropEdit /></Widget>
              <Widget $w={19} $join="r" $pad={0} $center><Chev /></Widget>
              <Widget $ml={8} $w={18} $tone="none" $pad={0} $center><XrayIcon /></Widget>
              <Widget $ml={6} $w={95} $pad={0} $tone="gray">
                <Seg $w={18}><ShadeWire /></Seg>
                <Seg $w={19} $tone="blue"><ShadeSolid /></Seg>
                <Seg $w={19}><ShadeMat /></Seg>
                <Seg $w={19}><ShadeRender /></Seg>
                <Seg $w={20} $tone="dark"><Chev /></Seg>
              </Widget>
            </HeaderRow>

            <ViewBody>
              <ToolColumn>
                <ToolGroup><Tool><ToolIcon name="cursor" /></Tool></ToolGroup>
                <ToolGroup>
                  <Tool $active><ToolIcon name="draw" /></Tool>
                  <Tool><ToolIcon name="fill" /></Tool>
                  <Tool><ToolIcon name="erase" /></Tool>
                  <Tool><ToolIcon name="tint" /></Tool>
                  <Tool><ToolIcon name="cutter" /></Tool>
                </ToolGroup>
                <ToolGroup><Tool><ToolIcon name="dropper" /></Tool></ToolGroup>
                <ToolGroup>
                  <Tool><ToolIcon name="line" /></Tool>
                  <Tool><ToolIcon name="poly" /></Tool>
                  <Tool><ToolIcon name="arc" /></Tool>
                  <Tool><ToolIcon name="curve" /></Tool>
                  <Tool><ToolIcon name="box" /></Tool>
                  <Tool><ToolIcon name="circle" /></Tool>
                </ToolGroup>
                <ToolGroup><Tool><ToolIcon name="annotate" /></Tool></ToolGroup>
              </ToolColumn>
              <ViewInfo>
                <div>Camera Orthographic</div>
                <ActiveName>(1) Cube.Carve</ActiveName>
              </ViewInfo>
            </ViewBody>

            <NavGizmo width="90" height="240" viewBox="1486 112 90 240" fill="none">
              <circle cx="1512" cy="139" r="6" fill="#8a3744" />
              <circle cx="1512" cy="162" r="6" fill="#86d21e" />
              <circle cx="1535" cy="179" r="6" fill="#2e6cac" />
              <path d="M1535 150V130" stroke="#2b86f5" strokeWidth="2" />
              <path d="M1535 150 1552 143" stroke="#6a8f26" strokeWidth="2" />
              <path d="M1535 150 1552 160" stroke="#f0324d" strokeWidth="2" />
              <circle cx="1535" cy="123" r="8" fill="#2b86f5" />
              <circle cx="1558" cy="140" r="8" fill="#6a8f26" />
              <circle cx="1558" cy="162" r="8" fill="#f0324d" />
              <text x="1535" y="127" textAnchor="middle" fontSize="10" fill="#123">Z</text>
              <text x="1558" y="144" textAnchor="middle" fontSize="10" fill="#2c3c10">Y</text>
              <text x="1558" y="166" textAnchor="middle" fontSize="10" fill="#5a1020">X</text>
              <circle cx="1562" cy="206" r="14" fill="#2b2b2b" />
              <circle cx="1564" cy="204" r="6" stroke="#e8e8e8" strokeWidth="1.6" />
              <path d="M1559 209l-5 5M1561 204h6M1564 201v6" stroke="#e8e8e8" strokeWidth="1.6" />
              <circle cx="1562" cy="236" r="14" fill="#2b2b2b" />
              <path d="M1557 236l-1-5 2 3v-8h2v6-8h2v8-7h2v7-5h2v9l-2 6h-6z" fill="#e8e8e8" />
              <circle cx="1562" cy="267" r="14" fill="#2b2b2b" />
              <circle cx="1558" cy="262" r="3" fill="#e8e8e8" />
              <circle cx="1565" cy="262" r="3" fill="#e8e8e8" />
              <path d="M1556 266h11v7h-11zM1568 270l3-2v5l-3-2z" fill="#e8e8e8" />
            </NavGizmo>

            <EdgeArrow $side="right" $top={62}><Ico s={9} vb={8} c="#bbb" d="M5 1 2 4l3 3" /></EdgeArrow>
            <OpPanel><Tri />Carve</OpPanel>
          </Viewport>

          <Timeline>
            <TimeHeader>
              <Widget $w={30} $pad={0} $center $gap={1}><TimelineIcon /><Chev /></Widget>
              <Widget $ml={6} $w={69} $join="l" $pad={7} $padR={3}><Grow>Playback</Grow><Chev /></Widget>
              <Widget $w={58} $join="r" $pad={7} $padR={3}><Grow>Keying</Grow><Chev /></Widget>
              <Widget $ml={7} $w={36} $tone="none" $pad={0}>View</Widget>
              <Widget $ml={5} $w={40} $tone="none" $pad={0}>Marker</Widget>
              <Widget $ml={450} $w={18} $tone="gray" $pad={0} $center>
                <svg width="8" height="8"><circle cx="4" cy="4" r="4" fill="#e8e8e8" /></svg>
              </Widget>
              <Widget $ml={7} $w={118} $tone="gray" $pad={0}>
                <Seg $w={19.6}><Transport d="M2 1h2v10H2zM10 1v10L5 6z" /></Seg>
                <Seg $w={19.6}><Transport d="M3 3 6 6 3 9 0 6zM9 3l3 3-3 3-3-3z" /></Seg>
                <Seg $w={19.6}><Transport d="M10 1v10L2 6z" /></Seg>
                <Seg $w={19.6}><Transport d="M2 0v12L12 6z" /></Seg>
                <Seg $w={19.6}><Transport d="M3 3 6 6 3 9 0 6zM9 3l3 3-3 3-3-3z" /></Seg>
                <Seg $w={19.6}><Transport d="M8 1h2v10H8zM2 1v10L7 6z" /></Seg>
              </Widget>
              <Widget $ml={442} $w={73} $tone="gray" $pad={0} $center>1</Widget>
              <Widget $ml={7} $w={19} $join="l" $pad={0} $center><ClockIcon /></Widget>
              <Widget $w={87} $tone="gray" $join="m" $pad={15} $color="#d8d8d8"><Grow>Start</Grow>1</Widget>
              <Widget $ml={1} $w={83} $tone="gray" $join="r" $pad={15} $color="#d8d8d8"><Grow>End</Grow>250</Widget>
            </TimeHeader>
            <Scrub>
              {frames.map(f => <FrameNum key={f}>{f}</FrameNum>)}
            </Scrub>
            <Tracks />
            <ScrollBar><ScrollEnd /><ScrollEnd /></ScrollBar>
            <FrameBadge>1</FrameBadge>
            <EndLine />
            <Playhead width="16" height="22" viewBox="0 0 16 22" fill="none">
              <path d="M8.5 0v18" stroke="#5680c2" />
              <path d="M8.5 6 12 11 8.5 16 5 11z" fill="#f2b33c" />
            </Playhead>
            <EdgeArrow $side="left" $top={36}><Ico s={9} vb={8} c="#999" d="M3 1l3 3-3 3" /></EdgeArrow>
            <EdgeArrow $side="right" $top={36}><Ico s={9} vb={8} c="#999" d="M5 1 2 4l3 3" /></EdgeArrow>
          </Timeline>
        </LeftColumn>

        <RightColumn>
          <Outliner>
            <PanelHeader>
              <Widget $w={30} $pad={0} $center $gap={1}><OutlinerType /><Chev /></Widget>
              <Widget $ml={6} $w={30} $pad={0} $center $gap={1}><LayerIcon /><Chev /></Widget>
              <Widget $ml={24} $w={109} $tone="field" $pad={3}><SearchIcon /></Widget>
              <Widget $ml={59} $w={30} $pad={0} $center $gap={1}><FilterIcon /><Chev /></Widget>
              <Widget $ml={7} $w={18} $tone="gray" $pad={0} $center><NewColl /></Widget>
            </PanelHeader>
            <OutRows>
              <OutRow $indent={21}>
                <IconChip $mr={3}><Collection /></IconChip>
                <OutName $w={200}>Scene Collection</OutName>
              </OutRow>
              <OutRow $alt $indent={25}>
                <Twist><Tri open /></Twist>
                <Check><Ico s={9} vb={8} c="#222" sw={1.4} d="M1 4l2 2 4-4" /></Check>
                <IconChip $hi $mr={4}><Collection /></IconChip>
                <OutName $w={200}>Collection</OutName>
                <EyeSlot><EyeIcon /></EyeSlot>
              </OutRow>
              <OutRow $indent={49}>
                <Branch><Tri /></Branch>
                <IconChip $mr={4}><CamObj /></IconChip>
                <OutName $w={77}>Cam_Carve</OutName>
                <OutExtras><IconChip $hi><CamData /></IconChip></OutExtras>
                <EyeSlot><EyeIcon /></EyeSlot>
              </OutRow>
              <OutRow $alt $indent={49}>
                <Branch><Tri /></Branch>
                <IconChip $mr={4}><CamObj /></IconChip>
                <OutName $w={59}>Camera</OutName>
                <OutExtras><IconChip><CamData /></IconChip></OutExtras>
                <EyeSlot><EyeIcon /></EyeSlot>
              </OutRow>
              <OutRow $sel $indent={49}>
                <Branch><Tri /></Branch>
                <IconChip $mr={4}><MeshObj /></IconChip>
                <OutName $w={45} $color="#d4702e">Cube</OutName>
                <OutExtras><IconChip><Wrench /></IconChip><IconChip><MeshData /></IconChip></OutExtras>
                <EyeSlot><EyeIcon /></EyeSlot>
              </OutRow>
              <OutRow $alt $indent={49}>
                <Branch><Tri /></Branch>
                <IconChip $hi $mr={4}><GpObj /></IconChip>
                <OutName $w={77}>Cube.Carve</OutName>
                <OutExtras><IconChip><ModBlue /></IconChip><IconChip><GpData /></IconChip></OutExtras>
                <EyeSlot><EyeIcon /></EyeSlot>
              </OutRow>
              <OutRow $indent={49}>
                <Branch $last><Tri /></Branch>
                <IconChip $mr={4}><LightObj /></IconChip>
                <OutName $w={45}>Light</OutName>
                <OutExtras><IconChip><LightData /></IconChip></OutExtras>
                <EyeSlot><EyeIcon /></EyeSlot>
              </OutRow>
              <OutRow $alt $indent={25}>
                <Twist><Tri open /></Twist>
                <Check><Ico s={9} vb={8} c="#222" sw={1.4} d="M1 4l2 2 4-4" /></Check>
                <IconChip $mr={4}><Collection /></IconChip>
                <OutName $w={200}>Carve_Objects</OutName>
                <EyeSlot><EyeIcon /></EyeSlot>
              </OutRow>
              <OutRow $sel $indent={49}>
                <Branch $last><Tri /></Branch>
                <IconChip $mr={4}><MeshObj /></IconChip>
                <OutName $w={143} $color="#d4702e">Cube.Mesh_Carve.Baked</OutName>
                <OutExtras><IconChip><BakeLink /></IconChip><IconChip><MeshData /></IconChip></OutExtras>
                <EyeSlot><EyeIcon /></EyeSlot>
              </OutRow>
            </OutRows>
          </Outliner>

          <Properties>
            <PanelHeader>
              <Widget $w={30} $pad={0} $center $gap={1}><PropsType /><Chev /></Widget>
              <Widget $ml={15} $w={20} $tone="none" $pad={0}><ObjIcon /></Widget>
              <Plain $w={230} $ml={3}>Cube.Carve</Plain>
              <PinIcon c="#8a8a8a" s={14} />
            </PanelHeader>
            <PropBody>
              <TabColumn>
                <TabGroup><PropTab><ToolTab /></PropTab></TabGroup>
                <TabGroup>
                  <PropTab><RenderTab /></PropTab>
                  <PropTab><OutputTab /></PropTab>
                  <PropTab><LayerIcon /></PropTab>
                  <PropTab><SceneIcon /></PropTab>
                  <PropTab><WorldTab /></PropTab>
                </TabGroup>
                <TabGroup>
                  <PropTab $active><ObjIcon c="#e8a060" /></PropTab>
                  <PropTab><Wrench /></PropTab>
                  <PropTab><ParticlesTab /></PropTab>
                  <PropTab><PhysicsTab /></PropTab>
                  <PropTab><ModBlue /></PropTab>
                  <PropTab><GpData /></PropTab>
                  <PropTab><MaterialTab /></PropTab>
                </TabGroup>
                <TabGroup><PropTab><TextureTab /></PropTab></TabGroup>
              </TabColumn>
              <PropMain>
                <NameRow>
                  <NameIcon><ObjIcon s={13} /><Chev /></NameIcon>
                  Cube.Carve
                </NameRow>
                <PanelTitle $mt={8} $h={25}><Tri open /><PanelText $dy={1}>Transform</PanelText><DragDots /></PanelTitle>
                <TransformBody>
                  {props.map(rows => <ValueGroup key={rows[0][0]} rows={rows} />)}
                  <PropGroup>
                    <PropRow $h={18}>
                      <PropLabel>Mode</PropLabel>
                      <ModeSelect><Grow>XYZ Euler</Grow><Chev /></ModeSelect>
                      <LockSlot />
                      <DotSlot />
                    </PropRow>
                  </PropGroup>
                  <ValueGroup rows={[['Scale X', '1.000'], ['Y', '1.000'], ['Z', '1.000']]} />
                  <DeltaRow><Tri />Delta Transform</DeltaRow>
                </TransformBody>
                {closedPanels.map(name => (
                  <PanelTitle key={name}><Tri /><PanelText>{name}</PanelText><DragDots /></PanelTitle>
                ))}
              </PropMain>
            </PropBody>
          </Properties>
        </RightColumn>
      </Body>

      <Gutter />
      <StatusBar>
        <StatusItem $w={133} $gap={13}><MouseIcon side="left" />Grease Pencil Draw</StatusItem>
        <StatusItem $w={104} $gap={13}><MouseIcon side="mid" />Move</StatusItem>
        <StatusItem $w={238} $gap={13}><MouseIcon side="mid" />Rotate View</StatusItem>
        <StatusItem $w={404} $gap={9}><MouseIcon side="right" />Draw Context Menu</StatusItem>
        <ReadyBadge>
          <svg width="14" height="15" viewBox="0 0 14 15">
            <path d="M2 1h10a1.5 1.5 0 0 1 1 1v9a1.5 1.5 0 0 1-1 1H7l-3 3v-3H2a1.5 1.5 0 0 1-1-1V2a1.5 1.5 0 0 1 1-1z" fill="#e0e6ee" />
            <path d="M6 3h2v2H6zM6 6h2v5H6z" fill="#203a63" />
          </svg>
          Ready to draw!
        </ReadyBadge>
        <StatusRight>Cube.Carve | Layers:0 | Frames:0 | Strokes:0 | Points:0 | Objects:2/6 | Mem: 31.2 MiB | 2.83.5</StatusRight>
      </StatusBar>
      <TaskSliver />
    </Page>
  );
}
